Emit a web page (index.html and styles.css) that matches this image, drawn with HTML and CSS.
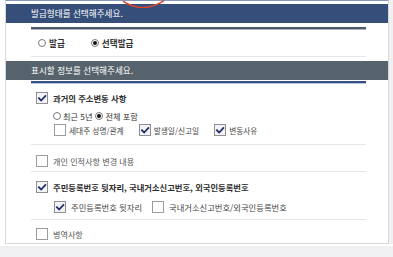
FILE: index.html
```html
<!DOCTYPE html>
<html lang="ko">
<head>
<meta charset="utf-8">
<link rel="stylesheet" href="styles.css">
</head>
<body>
<div class="page">
  <div class="top">
    <div class="panel">
      <svg class="mark" width="44" height="9" viewBox="0 0 44 9"><path d="M1 1.2 C 8 6, 16 8, 24 7.2 S 37 4, 42 0.6" fill="none" stroke="#e0452c" stroke-width="1.4"/></svg>
      <div class="hd hd1">발급형태를 선택해주세요.</div>
      <div class="sect">
        <div class="rule rule-gray"></div>
        <div class="issue-row">
          <label class="radio"><span class="rb"></span>발급</label>
          <label class="radio"><span class="rb on"></span>선택발급</label>
        </div>
      </div>
      <div class="hd hd2">표시할 정보를 선택해주세요.</div>
      <div class="sect">
        <div class="rule rule-navy"></div>
        <div class="item item-a">
          <div class="row"><span class="cb on"><svg viewBox="0 0 12 12"><path d="M2.3 5.6 L5 8.4 L10 3" /></svg></span><span class="title">과거의 주소변동 사항</span></div>
          <div class="sub sub-radio">
            <label class="radio small"><span class="rb"></span>최근 5년</label>
            <label class="radio small"><span class="rb on"></span>전체 포함</label>
          </div>
          <div class="sub sub-cb">
            <span class="opt"><span class="cb"></span>세대주 성명/관계</span>
            <span class="opt"><span class="cb on"><svg viewBox="0 0 12 12"><path d="M2.3 5.6 L5 8.4 L10 3" /></svg></span>발생일/신고일</span>
            <span class="opt"><span class="cb on"><svg viewBox="0 0 12 12"><path d="M2.3 5.6 L5 8.4 L10 3" /></svg></span>변동사유</span>
          </div>
        </div>
        <div class="item item-b">
          <div class="row"><span class="cb"></span><span class="plain">개인 인적사항 변경 내용</span></div>
        </div>
        <div class="item item-c">
          <div class="row"><span class="cb on"><svg viewBox="0 0 12 12"><path d="M2.3 5.6 L5 8.4 L10 3" /></svg></span><span class="title">주민등록번호 뒷자리, 국내거소신고번호, 외국인등록번호</span></div>
          <div class="sub sub-cb2">
            <span class="opt"><span class="cb on"><svg viewBox="0 0 12 12"><path d="M2.3 5.6 L5 8.4 L10 3" /></svg></span>주민등록번호 뒷자리</span>
            <span class="opt"><span class="cb"></span>국내거소신고번호/외국인등록번호</span>
          </div>
        </div>
        <div class="item item-d">
          <div class="row"><span class="cb"></span><span class="plain">병역사항</span></div>
        </div>
      </div>
    </div>
    <div class="side"></div>
  </div>
  <div class="foot"></div>
</div>
</body>
</html>
```

FILE: styles.css
```css
* { box-sizing: border-box; }
html, body { margin: 0; padding: 0; }
body {
  background: #ffffff;
  font-family: "Noto Sans CJK KR", "Noto Sans", sans-serif;
  color: #333;
  width: 393px;
  height: 257px;
  overflow: hidden;
}
.page { display: flex; flex-direction: column; }
.top { display: flex; padding-left: 5px; }
.panel {
  position: relative;
  width: 384px;
  border-top: 1px solid #8898bb;
  border-left: 1px solid #d8d8d8;
  border-right: 1px solid #d8d8d8;
  border-bottom: 1px solid #d8d8d8;
  padding-top: 3px;
  padding-bottom: 1px;
  background: #fff;
}
.side { width: 4px; background: #f0f0f2; }
.mark { position: absolute; left: 116px; top: -1px; }
.hd {
  height: 19px;
  line-height: 19px;
  color: #fff;
  font-size: 8.6px;
  padding-left: 25px;
}
.hd1 { background: #354e7a; }
.hd2 { background: #56636c; margin-top: 4px; }
.sect { margin-left: 25px; width: 335px; }
.rule-gray { margin-top: 4px; border-top: 2px solid #4d5a6c; background: #a9b2c2; height: 3px; }
.rule-navy { margin-top: 1px; border-top: 2px solid #33508a; background: #b6c0d6; height: 3px; }
.issue-row {
  height: 27px;
  display: flex;
  align-items: center;
  gap: 26px;
  padding-left: 7px;
  border-bottom: 1px solid #e6e6e6;
  font-size: 8.6px;
  font-weight: 700;
  color: #333;
}
.radio { display: flex; align-items: center; gap: 3px; }
.rb {
  width: 8px; height: 8px; border-radius: 50%;
  border: 1px solid #7a7a7a; background: #fff;
  display: inline-flex; align-items: center; justify-content: center;
}
.rb.on::after { content: ""; width: 4px; height: 4px; border-radius: 50%; background: #111; }
.item { border-bottom: 1px solid #e6e6e6; padding-left: 5px; }
.item-d { border-bottom: 0; }
.row { display: flex; align-items: center; height: 12px; gap: 5px; }
.cb {
  width: 12px; height: 12px; flex: none;
  border: 1px solid #9b9b9b; background: #fff;
  display: inline-flex; align-items: center; justify-content: center;
}
.cb.on { background: #f4f4f6; border-color: #8e8e94; }
.cb svg { width: 11px; height: 11px; }
.cb svg path { fill: none; stroke: #1d2c6b; stroke-width: 2.1; stroke-linecap: square; stroke-linejoin: miter; }
.title { font-size: 8.3px; font-weight: 700; color: #2e2e2e; }
.plain { font-size: 8.1px; color: #555; }
.sub { display: flex; align-items: center; padding-left: 18px; font-size: 8.3px; color: #444; }
.sub-radio { height: 12px; margin-top: 6px; gap: 3px; padding-left: 17px; font-size: 8.2px; }
.radio.small { gap: 2px; color: #333; }
.sub-cb { height: 12px; margin-top: 2px; gap: 15px; font-size: 7.7px; }
.sub-cb .opt { gap: 3px; }
.sub-cb2 { height: 12px; margin-top: 8px; gap: 10px; }
.opt { display: flex; align-items: center; gap: 5px; }
.item-a { padding-top: 8px; padding-bottom: 8px; }
.item-b { padding-top: 10px; padding-bottom: 4px; }
.item-c { padding-top: 9px; padding-bottom: 6px; }
.item-d { padding-top: 8px; padding-bottom: 2px; }
.foot { height: 12px; margin-top: 2px; background: #f0f0f2; }
```
